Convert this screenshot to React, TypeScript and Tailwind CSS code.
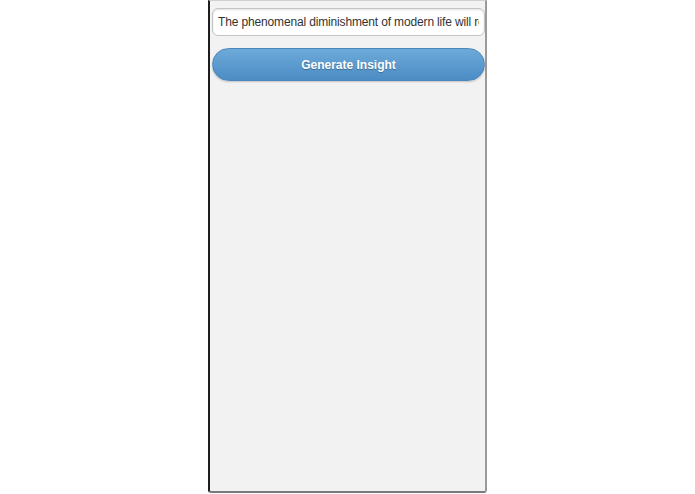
import React, { useState } from 'react';

export default function App() {
  const [text, setText] = useState<string>(
    'The phenomenal diminishment of modern life will reflect on all of us'
  );

  return (
    <div className="w-full h-[494px] bg-white flex justify-center overflow-hidden font-['Liberation_Sans',Arial,sans-serif]">
      <div className="w-[279px] h-[493px] bg-[#f2f2f2] border-l-2 border-l-[#1e1e1e] border-r-2 border-r-[#9a9a9a] border-b-2 border-b-[#7a7a7a] border-t border-t-[#d0d0d0] rounded-b-[3px] pl-[2px] pr-0 flex flex-col">
        <input
          value={text}
          onChange={(e) => setText(e.target.value)}
          className="mt-[7px] h-[28px] w-full px-[5px] text-[12px] tracking-[-0.15px] text-[#333] bg-white border border-[#c4c4c4] rounded-[6px] shadow-[inset_0_1px_2px_rgba(0,0,0,0.12)] outline-none"
          aria-label="Insight text"
        />
        <button
          type="button"
          className="mt-[12px] h-[33px] w-full rounded-full bg-gradient-to-b from-[#6daada] to-[#4c8cc4] border border-[#4a86ba] text-white font-bold text-[12px] [text-shadow:0_1px_1px_rgba(0,0,0,0.3)] shadow-[0_1px_2px_rgba(0,0,0,0.2)]"
        >
          Generate Insight
        </button>
      </div>
    </div>
  );
}
